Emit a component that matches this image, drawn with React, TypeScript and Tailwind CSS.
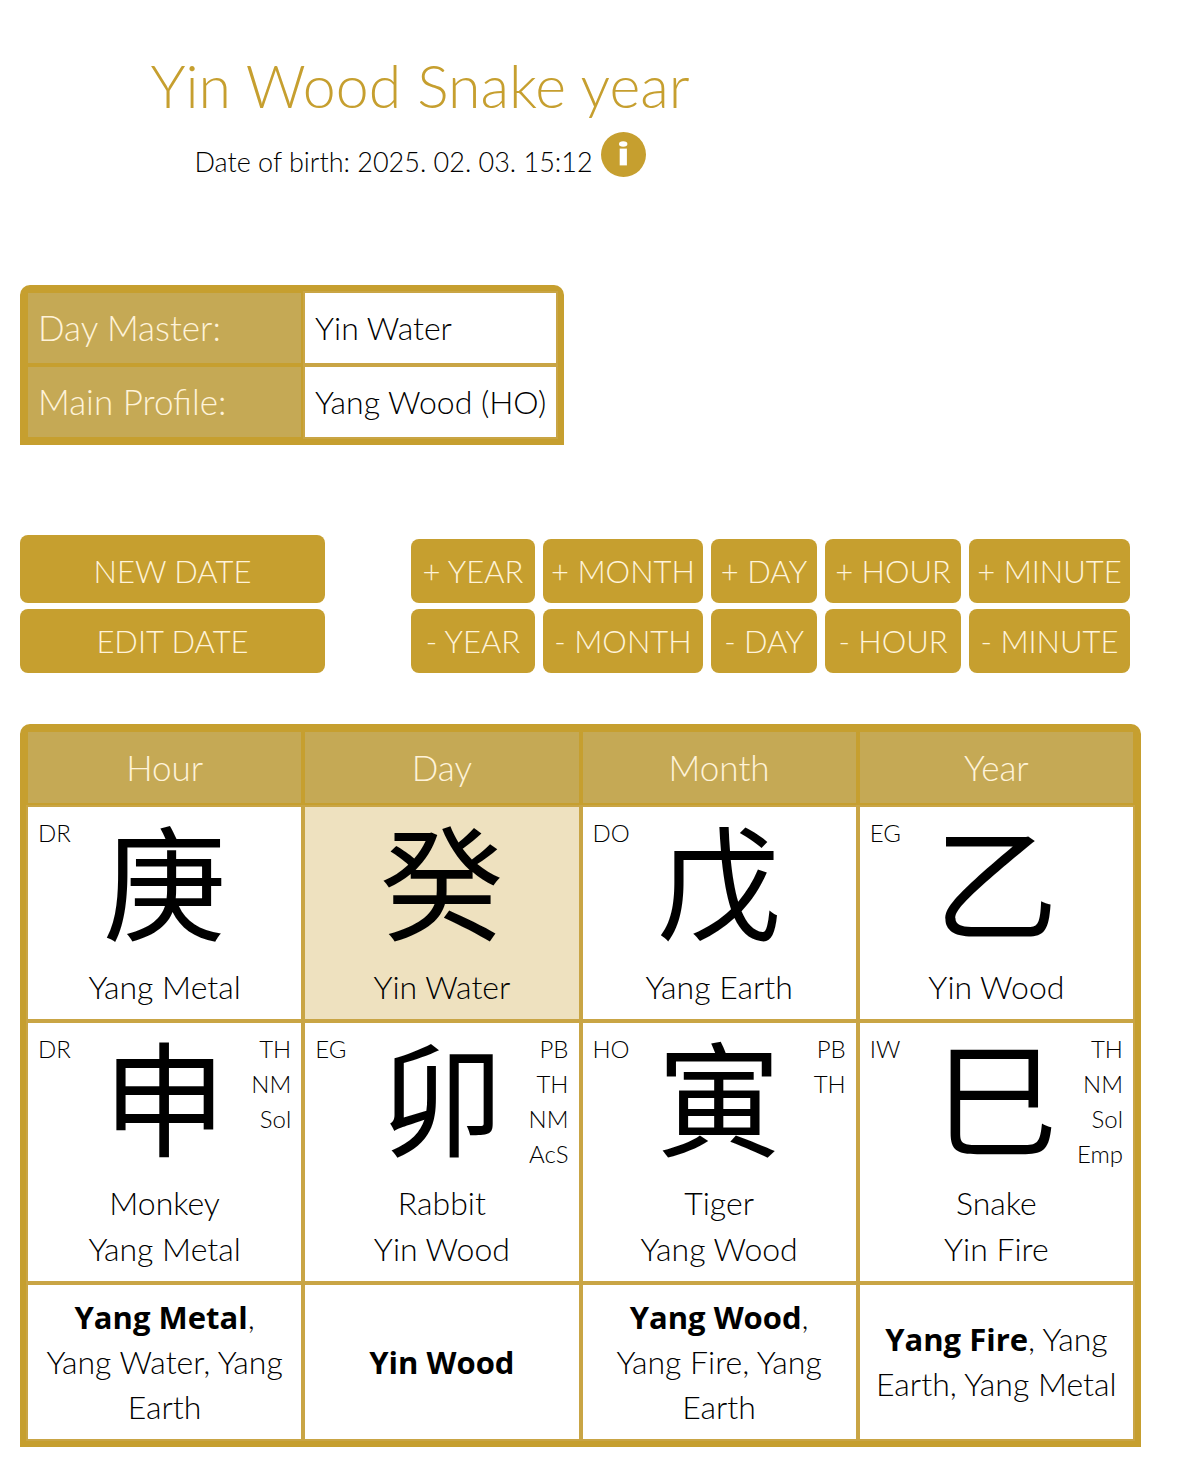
import type { ReactNode } from "react";

interface Pillar {
  title: string;
  stem: { glyph: string; name: string; god?: string };
  branch: { glyph: string; animal: string; element: string; god: string; stars: string[] };
  hidden: { main: string; rest?: string };
}

const pillars: Pillar[] = [
  {
    title: "Hour",
    stem: { glyph: "庚", name: "Yang Metal", god: "DR" },
    branch: { glyph: "申", animal: "Monkey", element: "Yang Metal", god: "DR", stars: ["TH", "NM", "Sol"] },
    hidden: { main: "Yang Metal", rest: "Yang Water, Yang Earth" },
  },
  {
    title: "Day",
    stem: { glyph: "癸", name: "Yin Water" },
    branch: { glyph: "卯", animal: "Rabbit", element: "Yin Wood", god: "EG", stars: ["PB", "TH", "NM", "AcS"] },
    hidden: { main: "Yin Wood" },
  },
  {
    title: "Month",
    stem: { glyph: "戊", name: "Yang Earth", god: "DO" },
    branch: { glyph: "寅", animal: "Tiger", element: "Yang Wood", god: "HO", stars: ["PB", "TH"] },
    hidden: { main: "Yang Wood", rest: "Yang Fire, Yang Earth" },
  },
  {
    title: "Year",
    stem: { glyph: "乙", name: "Yin Wood", god: "EG" },
    branch: { glyph: "巳", animal: "Snake", element: "Yin Fire", god: "IW", stars: ["TH", "NM", "Sol", "Emp"] },
    hidden: { main: "Yang Fire", rest: "Yang Earth, Yang Metal" },
  },
];

const units = ["YEAR", "MONTH", "DAY", "HOUR", "MINUTE"];

export default function App() {
  return (
    <main className="bg-white pt-[52px] pr-[38px] pb-[30px] pl-5 font-['Lato','Noto_Sans_CJK_TC',sans-serif] font-light text-black">
      <header className="max-w-[800px] text-center">
        <h1 className="text-[59px] leading-[68px] text-[#c69f2f]">Yin Wood Snake year</h1>
        <div className="mt-3 flex items-start justify-center gap-2">
          <p className="pt-3 text-[27px] leading-[36px]">Date of birth: 2025. 02. 03. 15:12</p>
          <button aria-label="Birth date information">
            <InfoIcon />
          </button>
        </div>
      </header>

      <div className="mt-[105px] w-fit rounded-t-[10px] border-[6px] border-[#c69f2f]">
        <table className="border-separate border-spacing-0">
          <tbody>
            <SummaryRow label="Day Master:" value="Yin Water" />
            <SummaryRow label="Main Profile:" value="Yang Wood (HO)" />
          </tbody>
        </table>
      </div>

      <div className="mt-[90px] flex items-end justify-between pr-[11px]">
        <div className="flex w-[305px] flex-col gap-[6px]">
          <Button className="h-[68px] pt-1">NEW DATE</Button>
          <Button className="h-16">EDIT DATE</Button>
        </div>
        <div className="grid w-[719px] grid-cols-[124fr_160fr_106fr_136fr_161fr] gap-x-2 gap-y-[6px]">
          {units.map((unit) => (
            <Button key={unit} className="h-16">+ {unit}</Button>
          ))}
          {units.map((unit) => (
            <Button key={unit} className="h-16">- {unit}</Button>
          ))}
        </div>
      </div>

      <div className="mt-[51px] rounded-t-[10px] border-[6px] border-[#c69f2f]">
        <table className="w-full table-fixed border-separate border-spacing-0 text-center text-[32px] leading-[46px]">
          <thead>
            <tr>
              {pillars.map((p) => (
                <th key={p.title} className="h-[75px] border-2 border-[#c69f2f] bg-[#c5a955] pb-[2px] text-[35px] font-light text-[#fff3d9]">
                  {p.title}
                </th>
              ))}
            </tr>
          </thead>
          <tbody>
            <tr>
              {pillars.map((p) => (
                <td key={p.title} className={`relative border-2 border-[#c9a545] px-2 pt-[7px] pb-[9px] ${p.title === "Day" ? "bg-[#eee1bf]" : ""}`}>
                  {p.stem.god && <Notes side="left" items={[p.stem.god]} />}
                  <Glyph>{p.stem.glyph}</Glyph>
                  <div>{p.stem.name}</div>
                </td>
              ))}
            </tr>
            <tr>
              {pillars.map((p) => (
                <td key={p.title} className="relative border-2 border-[#c9a545] px-2 pt-[7px] pb-[9px]">
                  <Notes side="left" items={[p.branch.god]} />
                  <Notes side="right" items={p.branch.stars} />
                  <Glyph>{p.branch.glyph}</Glyph>
                  <div>{p.branch.animal}</div>
                  <div>{p.branch.element}</div>
                </td>
              ))}
            </tr>
            <tr>
              {pillars.map((p) => (
                <td key={p.title} className="h-[158px] border-2 border-[#c9a545] px-[14px] pt-[7px] pb-[9px] leading-[45px]">
                  <strong className="font-['Open_Sans',sans-serif] text-[31px] leading-[30px] font-bold">{p.hidden.main}</strong>
                  {p.hidden.rest && <>, {p.hidden.rest}</>}
                </td>
              ))}
            </tr>
          </tbody>
        </table>
      </div>
    </main>
  );
}

function SummaryRow({ label, value }: { label: string; value: string }) {
  return (
    <tr>
      <th className="h-[74px] w-[277px] border-2 border-[#c69f2f] bg-[#c5a955] px-[10px] pb-[2px] text-left text-[35px] font-light text-[#fff3d9]">
        {label}
      </th>
      <td className="w-[254px] border-2 border-[#c9a545] px-[10px] text-[32px] whitespace-nowrap">{value}</td>
    </tr>
  );
}

function Button({ className, children }: { className: string; children: ReactNode }) {
  return (
    <button className={`rounded-lg bg-[#c69f2f] text-[31px] whitespace-nowrap text-[#fff3d9] hover:bg-[#b38e25] ${className}`}>
      {children}
    </button>
  );
}

function Glyph({ children }: { children: ReactNode }) {
  return <div className="h-[150px] text-[124px] leading-[138px] font-normal">{children}</div>;
}

function Notes({ side, items }: { side: "left" | "right"; items: string[] }) {
  return (
    <ul className={`absolute top-2 text-[24px] leading-[35px] ${side === "left" ? "left-[10px] text-left" : "right-[10px] text-right"}`}>
      {items.map((item) => (
        <li key={item}>{item}</li>
      ))}
    </ul>
  );
}

function InfoIcon() {
  return (
    <svg viewBox="0 0 45 45" className="size-[45px]" aria-hidden="true">
      <circle cx="22.5" cy="22.5" r="22.5" fill="#c69f2f" />
      <ellipse cx="22.2" cy="12" rx="4.2" ry="2.8" fill="#fff" />
      <path d="M18.7 16.6h7.2v16.8h-7.2z" fill="#fff" />
    </svg>
  );
}
